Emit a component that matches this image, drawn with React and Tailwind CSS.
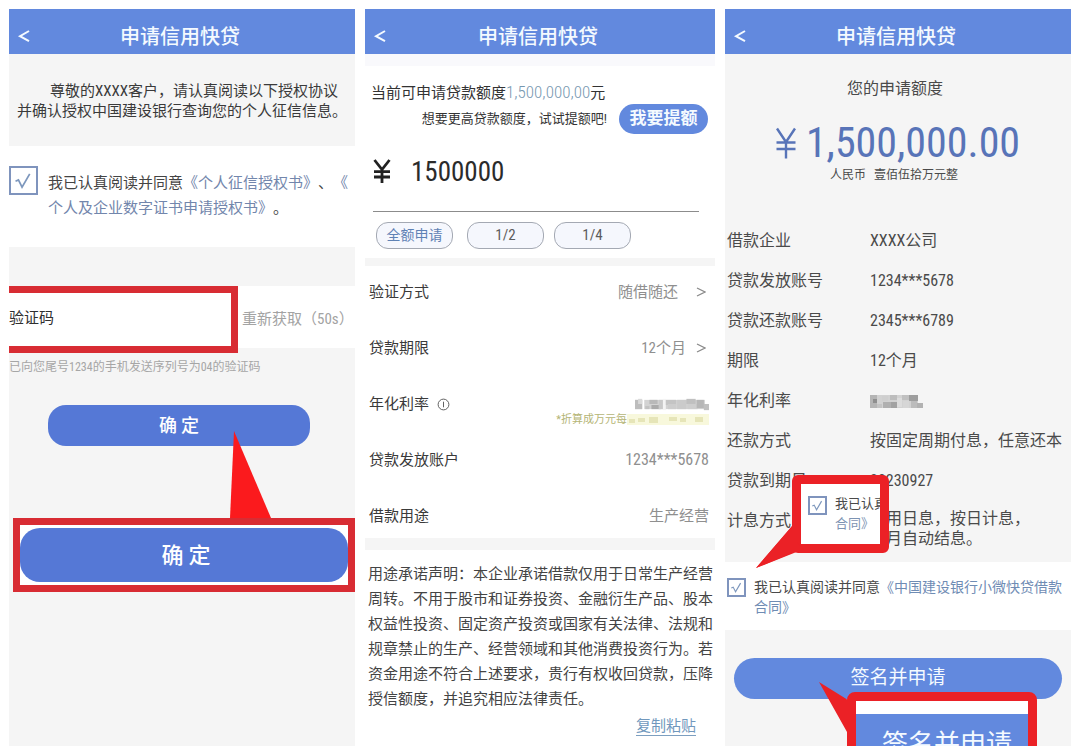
import React from 'react';

function Header() {
  return (
    <header className="relative flex h-[45px] items-center justify-center bg-[#6289de] pr-1 pt-[10px] text-[#f4faff]">
      <button type="button" aria-label="返回" className="absolute left-2 top-0 flex h-full items-center pt-2">
        <svg viewBox="0 0 14 14" className="size-[14px]" fill="none" stroke="currentColor" strokeWidth="2">
          <path d="M12 2 3 7.2l9 5" />
        </svg>
      </button>
      <h1 className="text-[20px] font-medium leading-6">申请信用快贷</h1>
    </header>
  );
}

function Screen({ className, children }) {
  return (
    <section className={'relative flex min-w-0 flex-col overflow-hidden whitespace-nowrap ' + className}>
      <Header />
      {children}
    </section>
  );
}

function Check({ id, label, large }) {
  return (
    <span className={'grid shrink-0 ' + (large ? 'size-[29px]' : 'size-[19px]')}>
      <input
        id={id}
        type="checkbox"
        defaultChecked
        aria-label={label}
        className="peer col-start-1 row-start-1 size-full appearance-none border-2 border-[#7f94bd] bg-white"
      />
      <svg
        viewBox="0 0 20 20"
        className="pointer-events-none invisible col-start-1 row-start-1 size-full peer-checked:visible"
        fill="none"
        stroke="#7d97bd"
        strokeWidth="1.2"
      >
        <path d="M4.5 10.5 6.5 9.6 9 14.6 14.3 5.4" />
      </svg>
    </span>
  );
}

function Chevron() {
  return (
    <svg viewBox="0 0 10 12" className="h-3 w-[10px]" fill="none" stroke="#8a8a8a" strokeWidth="1.3">
      <path d="M1 2l8 4-8 4" />
    </svg>
  );
}

const RATE = [
  [0, 1, 72, 9, '#d3d3d3'], [7, 0, 2, 11, '#fff'], [27, 0, 3, 11, '#f4f4f4'],
  [0, 1, 7, 9, '#bdbdbd'], [3, 0, 4, 5, '#d9d9d9'], [10, 7, 4, 3, '#c2c2c2'], [14, 1, 8, 4, '#b9b9b9'],
  [16, 6, 9, 4, '#ababab'], [23, 1, 4, 9, '#c9c9c9'], [30, 1, 10, 5, '#c4c4c4'], [32, 5, 8, 5, '#cdcdcd'],
  [41, 1, 9, 9, '#cbcbcb'], [50, 0, 9, 5, '#c0c0c0'], [51, 5, 10, 5, '#cecece'], [60, 1, 7, 8, '#b7b7b7'],
  [67, 5, 5, 6, '#c0c0c0'], [68, 0, 4, 5, '#fff'],
];

const RATE_SHORT = [
  [0, 0, 48, 13, '#d2d2d2'],
  [0, 0, 7, 13, '#b5b5b5'], [3, 4, 4, 4, '#8f8f8f'], [7, 9, 5, 4, '#c4c4c4'], [12, 1, 6, 5, '#cfcfcf'],
  [13, 7, 8, 6, '#b0b0b0'], [20, 0, 7, 5, '#bdbdbd'], [21, 7, 6, 6, '#a2a2a2'], [27, 3, 5, 9, '#dcdcdc'],
  [32, 0, 8, 5, '#c0c0c0'], [33, 6, 6, 7, '#d6d6d6'], [39, 0, 9, 6, '#9e9e9e'], [41, 6, 6, 7, '#bcbcbc'],
  [47, 8, 6, 5, '#b2b2b2'],
];

function Mosaic({ cells, label, className, viewBox }) {
  return (
    <svg role="img" aria-label={label} viewBox={viewBox} className={className}>
      {cells.map(([x, y, w, h, c], i) => (
        <rect key={i} x={x} y={y} width={w} height={h} fill={c} />
      ))}
    </svg>
  );
}

function AuthorizeScreen() {
  return (
    <Screen className="bg-[#f5f5f5]">
      <p className="h-[92px] pt-[27px] text-center text-[15px] leading-5 text-[#3a3a3a]">
        <span className="pl-6">尊敬的XXXX客户，请认真阅读以下授权协议</span>
        <br />
        并确认授权中国建设银行查询您的个人征信信息。
      </p>
      <div className="flex h-[101px] gap-[10px] bg-white pt-5">
        <Check id="agree-credit" label="我已认真阅读并同意" large />
        <p className="pt-[5px] text-[15px] leading-[25px] text-[#444]">
          <label htmlFor="agree-credit">我已认真阅读并同意</label>
          <a href="#credit" className="text-[#7286ac]">《个人征信授权书》</a>、
          <a href="#certificate" className="text-[#7286ac]">《<br />个人及企业数字证书申请授权书》</a>。
        </p>
      </div>
      <div className="mt-[39px] flex h-[67px] items-stretch">
        <div className="flex w-[229px] shrink-0 items-center border-y-[7px] border-r-[7px] border-[#d82c33] bg-white pb-1">
          <label htmlFor="code" className="text-[15px] leading-5 text-[#2f2f2f]">验证码</label>
          <input id="code" type="text" className="min-w-0 flex-1 bg-transparent px-2 text-[15px] outline-none" />
        </div>
        <button type="button" className="mb-[5px] flex-1 bg-white pl-1 pt-1 text-left text-[15px] leading-5 text-[#a3a3a3]">
          重新获取（50s）
        </button>
      </div>
      <p className="pt-1 text-[12px] leading-5 text-[#a6a6a6]">已向您尾号1234的手机发送序列号为04的验证码</p>
      <div className="pl-[39px] pr-[45px] pt-7">
        <button type="button" className="h-[41px] w-full rounded-[18px] bg-[#5578d6] text-[18px] font-medium text-white">
          确 定
        </button>
      </div>
      <div className="relative mt-[72px] pl-1">
        <svg viewBox="0 0 42 87" className="absolute bottom-full left-[220px] h-[87px] w-[42px]" fill="#fb1a1d">
          <path d="M5 0 42 87H1Z" />
        </svg>
        <div className="relative h-[74px] overflow-hidden border-[7px] border-[#d82c33] bg-white py-[3px]">
          <button type="button" className="h-[54px] w-full rounded-[20px] bg-[#5578d6] pl-1 text-[22px] font-medium text-white">
            确 定
          </button>
        </div>
      </div>
    </Screen>
  );
}

function Row({ label, children }) {
  return (
    <div className="flex h-6 items-center justify-between">
      <dt className="flex items-center gap-2 text-[#3a3a3a]">{label}</dt>
      <dd className="flex items-center text-[#8f8f8f]">{children}</dd>
    </div>
  );
}

function AmountScreen() {
  return (
    <Screen className="bg-white">
      <div className="h-3 bg-[#f9f9fc]" />
      <div className="flex h-[69px] items-start gap-3 pl-[6px] pt-4 text-[#333]">
        <div className="w-[236px] shrink-0">
          <p className="text-[15px] leading-5">
            当前可申请贷款额度<span className="text-[17px] font-light text-[#7697b0]">1,500,000,00</span>元
          </p>
          <p className="pt-1 text-right text-[13px] leading-6">想要更高贷款额度，试试提额吧!</p>
        </div>
        <button type="button" className="mt-[22px] h-[30px] w-[89px] shrink-0 rounded-full bg-[#6289de] text-[17px] font-bold text-[#f4faff]">
          我要提额
        </button>
      </div>
      <div className="ml-2 mr-4 flex h-[77px] items-start gap-5 border-b border-[#8c8c8c] pt-5">
        <label htmlFor="amount" className="pt-[3px] leading-[30px]">
          <svg role="img" aria-label="金额" viewBox="0 0 18 26" className="h-[26px] w-[18px]" fill="none" stroke="#222" strokeWidth="2.8">
            <path d="M1.5 2 9 11.5 16.5 2M9 11v14M1 13.6h16M1 19h16" />
          </svg>
        </label>
        <input
          id="amount"
          type="text"
          defaultValue="1500000"
          className="min-w-0 flex-1 bg-transparent text-[27px] leading-[34px] text-[#2b2b2b] outline-none"
        />
      </div>
      <div className="flex h-[46px] gap-[10px] pl-[11px] pt-[10px] text-[14px]">
        <button type="button" className="mr-1 h-[27px] w-[77px] rounded-xl border border-[#a4a9b3] bg-[#f5f7fd] text-[#5f82b5]">全额申请</button>
        <button type="button" className="h-[27px] w-[77px] rounded-xl border border-[#a4a9b3] bg-[#f5f7fd] text-[15px] text-[#5c5c5c]">1/2</button>
        <button type="button" className="h-[27px] w-[77px] rounded-xl border border-[#a4a9b3] bg-[#f5f7fd] text-[15px] text-[#5c5c5c]">1/4</button>
      </div>
      <div className="h-2 bg-[#f5f5f5]" />
      <dl className="flex flex-col gap-8 pb-[10px] pl-1 pr-[6px] pt-[14px] text-[15px] leading-6">
        <Row label="验证方式">
          随借随还
          <button type="button" aria-label="选择验证方式" className="pl-[18px] pr-[3px]"><Chevron /></button>
        </Row>
        <Row label="贷款期限">
          <span>12个月</span>
          <button type="button" aria-label="选择贷款期限" className="pl-[10px] pr-[3px]"><Chevron /></button>
        </Row>
        <Row
          label={
            <>
              年化利率
              <svg viewBox="0 0 14 14" className="size-[13px]" fill="none" stroke="#555">
                <circle cx="7" cy="7" r="5.8" />
                <path d="M7 4v6" />
              </svg>
            </>
          }
        >
          <div className="relative">
            <Mosaic cells={RATE} label="利率" viewBox="0 0 72 11" className="h-[13px] w-[74px]" />
            <p className="absolute right-0 top-full flex items-center pt-[2px] text-[11px] leading-[14px] text-[#b5b576]">
              *折算成万元每
              <svg viewBox="0 0 82 12" className="h-3 w-[82px]">
                <path fill="#f8f8dc" d="M0 0h82v11H0z" />
                <path fill="#e6e5b8" d="M2 5h6v4H2zM11 4h7v4h-7zM22 3h9v6h-9zM42 3h8v4h-8zM53 4h6v4h-6zM68 3h8v5h-8z" />
              </svg>
            </p>
          </div>
        </Row>
        <Row label="贷款发放账户"><span className="text-[16px]">1234***5678</span></Row>
        <Row label="借款用途">生产经营</Row>
      </dl>
      <div className="h-3 bg-[#f5f5f5]" />
      <p className="pl-[3px] pt-3 text-[15px] leading-[25px] text-[#444]">
        用途承诺声明：本企业承诺借款仅用于日常生产经营<br />
        周转。不用于股市和证券投资、金融衍生产品、股本<br />
        权益性投资、固定资产投资或国家有关法律、法规和<br />
        规章禁止的生产、经营领域和其他消费投资行为。若<br />
        资金用途不符合上述要求，贵行有权收回贷款，压降<br />
        授信额度，并追究相应法律责任。
      </p>
      <a href="#copy" className="mr-[19px] mt-[5px] self-end border-b border-[#7d9fc0] text-[15px] leading-[18px] text-[#7198bd]">
        复制粘贴
      </a>
    </Screen>
  );
}

const DETAILS = [
  ['借款企业', 'XXXX公司'],
  ['贷款发放账号', '1234***5678'],
  ['贷款还款账号', '2345***6789'],
  ['期限', '12个月'],
  ['年化利率', <Mosaic key="rate" cells={RATE_SHORT} label="利率" viewBox="0 0 53 13" className="h-[13px] w-[53px]" />],
  ['还款方式', '按固定周期付息，任意还本'],
  ['贷款到期日', '20230927'],
];

function ConfirmScreen() {
  return (
    <Screen className="bg-[#f5f5f5]">
      <div className="flex h-[175px] flex-col items-center pt-[23px] text-[#4a4a4a]">
        <h2 className="pr-[6px] text-[16px] leading-6">您的申请额度</h2>
        <p className="flex items-center gap-[10px] pt-5 text-[42px] leading-[44px] text-[#5874b8]">
          <svg role="img" aria-label="¥" viewBox="0 0 20 32" className="h-8 w-5" fill="none" stroke="currentColor" strokeWidth="2.4">
            <path d="M1 1.5 10 15 19 1.5M10 14v17.5M.5 15.5h19M.5 22h19" />
          </svg>
          1,500,000.00
        </p>
        <p className="flex gap-2 pr-2 text-[12px] leading-5"><span>人民币</span><span>壹佰伍拾万元整</span></p>
      </div>
      <div className="relative">
        <dl className="flex flex-col gap-4 pl-[2px] text-[16px] leading-6 text-[#4a4a4a]">
          {DETAILS.map(([name, value]) => (
            <div key={name} className="flex h-6 items-center">
              <dt className="w-[143px] shrink-0">{name}</dt>
              <dd>{value}</dd>
            </div>
          ))}
          <div className="flex">
            <dt className="w-[143px] shrink-0">计息方式</dt>
            <dd className="leading-5">采用日息，按日计息，<br />每月自动结息。</dd>
          </div>
        </dl>
        <div className="absolute left-[67px] top-[246px] h-[78px] w-[97px] rounded-md border-[9px] border-[#eb2126] bg-white">
          <svg viewBox="0 0 48 44" className="absolute -left-[45px] top-[41px] h-11 w-12" fill="#eb2126">
            <path d="M37 0v14l11 10L0 43Z" />
            <path d="M37 0h4v26L0 43Z" />
          </svg>
          <div className="flex h-full gap-2 overflow-hidden pl-[7px] pt-3">
            <Check id="agree-zoomed" label="我已认真阅读并同意合同" />
            <p className="-mt-[2px] text-[13px] leading-5 text-[#4a4a4a]">
              我已认真<br />
              <a href="#contract" className="text-[#7d93b3]">合同》</a>
            </p>
          </div>
        </div>
      </div>
      <div className="mt-[13px] flex h-[68px] gap-2 bg-white pl-[2px] pt-4">
        <Check id="agree-contract" label="我已认真阅读并同意借款合同" />
        <p className="-mt-px text-[14px] leading-5 text-[#4a4a4a]">
          <label htmlFor="agree-contract">我已认真阅读并同意</label>
          <a href="#contract" className="text-[#6f8cb4]">《中国建设银行小微快贷借款<br />合同》</a>
        </p>
      </div>
      <div className="relative px-[9px] pt-7">
        <button type="button" className="h-[41px] w-full rounded-full bg-[#6289de] text-[19px] text-[#f4faff]">签名并申请</button>
        <div className="absolute left-[122px] top-[62px]">
          <svg viewBox="0 0 40 60" className="absolute -left-[28px] -top-[10px] h-[60px] w-10" fill="#eb2126">
            <path d="M0 0 29 18 38 12V60H28V50Z" />
          </svg>
          <div className="relative h-[90px] w-[190px] rounded-lg border-[9px] border-[#eb2126] bg-white pt-[13px]">
            <button type="button" className="h-full w-full bg-[#6289de] pl-[10px] text-[26px] leading-8 text-[#f4faff]">签名并申请</button>
          </div>
        </div>
      </div>
    </Screen>
  );
}

export default function App() {
  return (
    <main className="grid min-h-screen grid-cols-[346fr_350fr_346fr] gap-[10px] bg-white px-[9px] pt-[9px] font-['Roboto_Condensed','Noto_Sans_CJK_SC',sans-serif] [text-spacing-trim:space-all]">
      <AuthorizeScreen />
      <AmountScreen />
      <ConfirmScreen />
    </main>
  );
}
